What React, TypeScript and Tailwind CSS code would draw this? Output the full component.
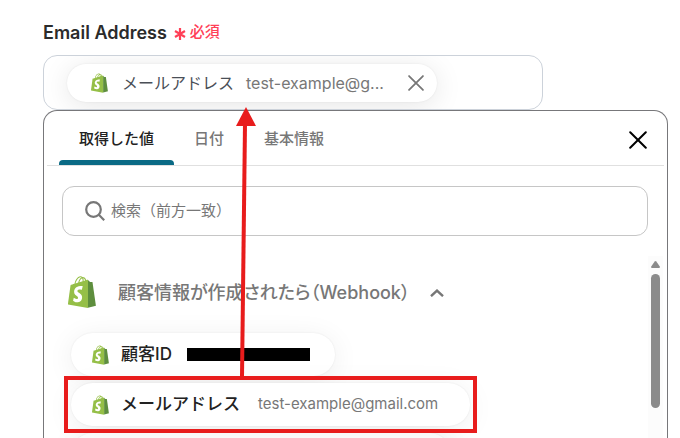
import type { ReactNode } from "react";

function ShopifyIcon({ className }: { className: string }) {
  return (
    <svg viewBox="0 0 109.5 124.5" className={className} aria-hidden="true">
      <path
        fill="#95BF47"
        fillRule="evenodd"
        d="M74.7,14.8c0,0-1.4,0.4-3.7,1.1c-0.4-1.3-1-2.8-1.8-4.4c-2.6-5-6.5-7.7-11.1-7.7c-0.3,0-0.6,0-1,0.1c-0.1-0.2-0.3-0.3-0.4-0.5c-2-2.2-4.6-3.2-7.7-3.1c-6,0.2-12,4.5-16.8,12.2c-3.4,5.4-6,12.2-6.7,17.5c-6.9,2.1-11.7,3.6-11.8,3.7c-3.5,1.1-3.6,1.2-4,4.5C9.4,40.7,0,111,0,111l78.1,13.5V14.6C75.3,14.7,75,14.7,74.7,14.8z M57.2,20.2c-4,1.2-8.4,2.6-12.7,3.9c1.2-4.7,3.6-9.4,6.4-12.5c1.1-1.1,2.6-2.4,4.3-3.2C56.9,11.9,57.3,16.9,57.2,20.2z M49.1,4.4c1.4,0,2.6,0.3,3.6,0.9c-1.6,0.8-3.2,2.1-4.7,3.6c-3.8,4.1-6.7,10.5-7.9,16.6c-3.6,1.1-7.2,2.2-10.5,3.2C31.7,19.1,39.8,4.6,49.1,4.4z M66.7,17.3L61.4,18.9c0-3.5-0.5-7.6-1.5-10.8C63.4,8.8,65.6,13.3,66.7,17.3z"
      />
      <path
        fill="#5E8E3E"
        d="M78.1,123.9l31.4-7.8c0,0-13.5-91.3-13.6-91.9c-0.1-0.6-0.6-1-1.1-1c-0.5,0-9.3-0.2-9.3-0.2s-5.4-5.2-7.4-7.2V123.9z"
      />
      <path
        fill="#fff"
        d="M57.6,39.9l-3.8,14.2c0,0-4.3-1.9-9.4-1.6c-7.5,0.5-7.5,5.2-7.5,6.4c0.4,6.4,17.3,7.8,18.3,22.9c0.7,11.9-6.3,20-16.4,20.6c-12.2,0.8-18.9-6.4-18.9-6.4l2.6-11c0,0,6.7,5.1,12.1,4.7c3.5-0.2,4.8-3.1,4.7-5.1c-0.5-8.4-14.3-7.9-15.2-21.7C23.4,51.3,31,40.2,47.8,39.1C54.3,38.7,57.6,39.9,57.6,39.9z"
      />
    </svg>
  );
}

function CloseIcon({ className }: { className: string }) {
  return (
    <svg
      viewBox="0 0 18 18"
      fill="none"
      stroke="currentColor"
      strokeLinecap="round"
      className={className}
      aria-hidden="true"
    >
      <path d="M1.2 1.2l15.6 15.6M16.8 1.2L1.2 16.8" />
    </svg>
  );
}

function ValueChip({ label, children }: { label: string; children?: ReactNode }) {
  return (
    <button
      type="button"
      className="flex h-[43px] items-center rounded-full bg-white pr-8 pl-[21px] text-left shadow-[0_4px_28px_rgba(0,0,0,0.07),0_0_2px_rgba(0,0,0,0.08)]"
    >
      <ShopifyIcon className="h-5 w-[17px]" />
      <span className="ml-3 text-[17px] font-medium text-[#222222]">{label}</span>
      {children}
    </button>
  );
}

const tabs = ["取得した値", "日付", "基本情報"];

export default function App() {
  return (
    <main className="relative flex h-screen flex-col overflow-hidden bg-white pt-5 pr-3 pl-[43px] font-['Inter','Noto_Sans_CJK_JP',sans-serif]">
      <div className="flex h-6 items-center">
        <h1 className="text-[18px] font-semibold text-[#2b2b2b]">Email Address</h1>
        <svg
          viewBox="0 0 12 12"
          className="mt-1 ml-[7px] h-3 w-3 text-[#ff4057]"
          stroke="currentColor"
          strokeWidth="2.2"
          aria-hidden="true"
        >
          <path d="M6 0v12M1 3l10 6M11 3L1 9" />
        </svg>
        <span className="ml-1 text-[15px] font-medium text-[#ff4057]">必須</span>
      </div>

      <div className="mt-[11px] flex h-[55px] w-full max-w-[500px] shrink-0 items-center overflow-hidden rounded-[14px] border border-[#ccd2da] px-[23px]">
        <div className="flex h-[38px] w-[370px] items-center rounded-full bg-white pr-[13px] pl-6 shadow-[0_4px_28px_rgba(0,0,0,0.1),0_0_2px_rgba(0,0,0,0.08)]">
          <ShopifyIcon className="h-5 w-[17px] shrink-0" />
          <span className="ml-3.5 shrink-0 text-[16px] text-[#4a4f57]">メールアドレス</span>
          <span className="ml-3 text-[16px] text-[#777777]">test-example@g...</span>
          <button type="button" aria-label="値を削除" className="ml-auto text-[#777777]">
            <CloseIcon className="h-4 w-4 stroke-2" />
          </button>
        </div>
      </div>

      <section className="flex min-h-0 grow flex-col rounded-t-[14px] border border-b-0 border-[#77777a]">
        <div className="mx-[3px] flex h-[55px] shrink-0 border-b border-[#e0e0e0] pr-[17px] pl-3">
          <div role="tablist" className="flex">
            {tabs.map((tab, i) => (
              <button
                key={tab}
                type="button"
                role="tab"
                aria-selected={i === 0}
                className="group flex flex-col items-center text-[15px] font-medium text-[#777777] aria-selected:text-[#222222]"
              >
                <span className="flex grow items-center px-5 pt-2">{tab}</span>
                <span className="h-[5px] w-full rounded-t group-aria-selected:bg-[#0a6a85]" />
              </button>
            ))}
          </div>
          <button type="button" aria-label="閉じる" className="mt-1 ml-auto text-black">
            <CloseIcon className="h-[18px] w-[18px] stroke-2" />
          </button>
        </div>

        <label className="mr-[19px] ml-[18px] mt-5 flex h-[50px] shrink-0 items-center rounded-xl border border-[#c6c6c6] pr-4 pl-[22px]">
          <svg
            viewBox="0 0 20 20"
            fill="none"
            stroke="#777777"
            strokeWidth="2.2"
            className="h-5 w-5 shrink-0"
            aria-hidden="true"
          >
            <circle cx="8.5" cy="8.5" r="7.3" />
            <path d="M13.8 13.8l5.4 5.4" />
          </svg>
          <input
            type="text"
            aria-label="検索"
            placeholder="検索（前方一致）"
            className="ml-1.5 min-w-0 grow text-[15px] text-[#222222] outline-none placeholder:text-[#777777]"
          />
        </label>

        <div className="mt-5 flex min-h-0 grow">
          <div className="min-w-0 grow overflow-hidden pt-5 pl-6">
            <button type="button" aria-expanded="true" className="flex items-center text-[#777777]">
              <ShopifyIcon className="h-8 w-7" />
              <span className="ml-[22px] text-[18px] font-medium [font-feature-settings:'palt']">
                顧客情報が作成されたら（Webhook）
              </span>
              <svg
                viewBox="0 0 14 8"
                fill="none"
                stroke="currentColor"
                strokeWidth="2.4"
                className="mt-0.5 ml-5 h-2 w-[14px]"
                aria-hidden="true"
              >
                <path d="M1 7.2l6-5.6 6 5.6" />
              </svg>
            </button>

            <div className="mt-[25px] ml-[3px] flex flex-col items-start gap-[7px]">
              <ValueChip label="顧客ID">
                <span className="mr-[-7px] ml-[15px] h-[13px] w-[123px] bg-black" />
              </ValueChip>
              <div className="relative">
                <ValueChip label="メールアドレス">
                  <span className="ml-[18px] text-[15px] text-[#777777]">test-example@gmail.com</span>
                </ValueChip>
                <div className="pointer-events-none absolute -inset-x-[7px] -inset-y-[7px] z-10 border-4 border-[#e81c1c]" />
              </div>
              <div className="h-[43px] w-[380px] shrink-0 rounded-full bg-white shadow-[0_4px_28px_rgba(0,0,0,0.07),0_0_2px_rgba(0,0,0,0.08)]" />
            </div>
          </div>

          <div className="mr-1 flex w-[15px] shrink-0 flex-col items-center bg-[#fcfcfc] pt-[5px]">
            <svg viewBox="0 0 9 7" className="h-[7px] w-[9px]" fill="#8b8b8b" aria-hidden="true">
              <path d="M3.7 0.6Q4.5 -0.4 5.3 0.6L8.8 5.6Q9.2 7 8 7H1Q-0.2 7 0.2 5.6Z" />
            </svg>
            <div className="mt-1.5 h-[134px] w-[9px] rounded-full bg-[#8b8b8b]" />
          </div>
        </div>
      </section>

      <svg
        viewBox="0 0 20 270"
        className="pointer-events-none absolute top-[107px] left-[236px] z-20 h-[270px] w-5"
        aria-hidden="true"
      >
        <path d="M9 17L6 270" stroke="#e81c1c" strokeWidth="4" />
        <path d="M10 0L20 19H0Z" fill="#e81c1c" />
      </svg>
    </main>
  );
}
